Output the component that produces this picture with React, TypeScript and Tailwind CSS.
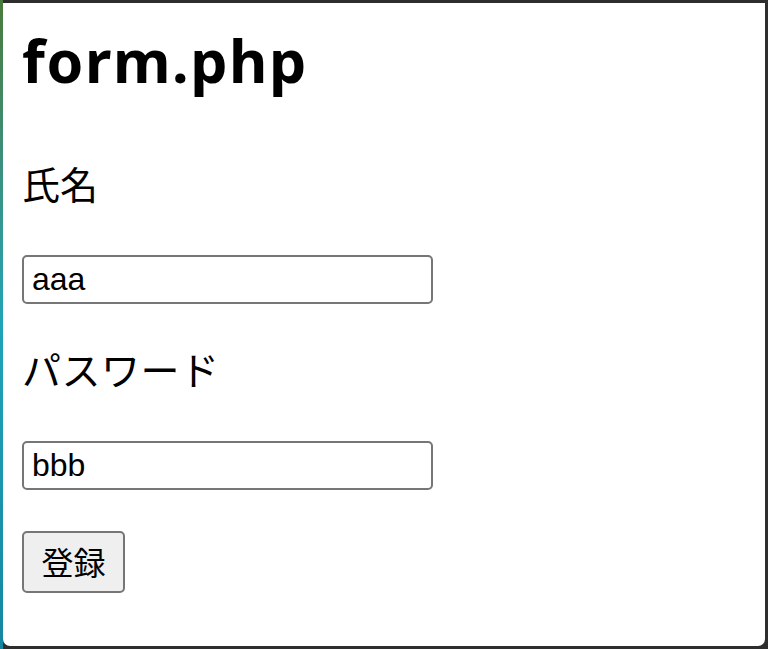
export default function App() {
  return (
    <div className="flex h-[649px] w-[768px] overflow-hidden bg-[#2e2e2e]">
      {/* desktop wallpaper peeking through on the left */}
      <div className="h-full w-[3px] bg-gradient-to-b from-[#4a7a3a] via-[#1fa3b8] to-[#1487a0]" />
      <div className="mb-[3px] mr-[3px] mt-[3px] flex flex-1 flex-col items-start rounded-b-[7px] bg-white pl-[19px] text-black">
        <h1 className="mt-[22px] font-['Noto_Sans',sans-serif] text-[59px] font-bold leading-[70px] tracking-[1.6px]">
          form.php
        </h1>
        <p className="mt-[59px] font-['Noto_Sans_CJK_JP',sans-serif] text-[38px] leading-[57px]">
          氏名
        </p>
        <input
          type="text"
          defaultValue="aaa"
          className="mt-[44px] h-[49px] w-[411px] rounded-[5px] border-2 border-[#767676] bg-white px-[8px] font-['Liberation_Sans',sans-serif] text-[32px] text-black outline-none"
        />
        <p className="mt-[36px] font-['Noto_Sans_CJK_JP',sans-serif] text-[39px] leading-[57px] tracking-[0.5px]">
          パスワード
        </p>
        <input
          type="text"
          defaultValue="bbb"
          className="mt-[44px] h-[49px] w-[411px] rounded-[5px] border-2 border-[#767676] bg-white px-[8px] font-['Liberation_Sans',sans-serif] text-[32px] text-black outline-none"
        />
        <button className="mt-[41px] h-[62px] w-[103px] rounded-[5px] border-2 border-[#767676] bg-[#efefef] pb-[3px] font-['Noto_Sans_CJK_JP',sans-serif] text-[32px] leading-none text-black">
          登録
        </button>
      </div>
    </div>
  );
}
